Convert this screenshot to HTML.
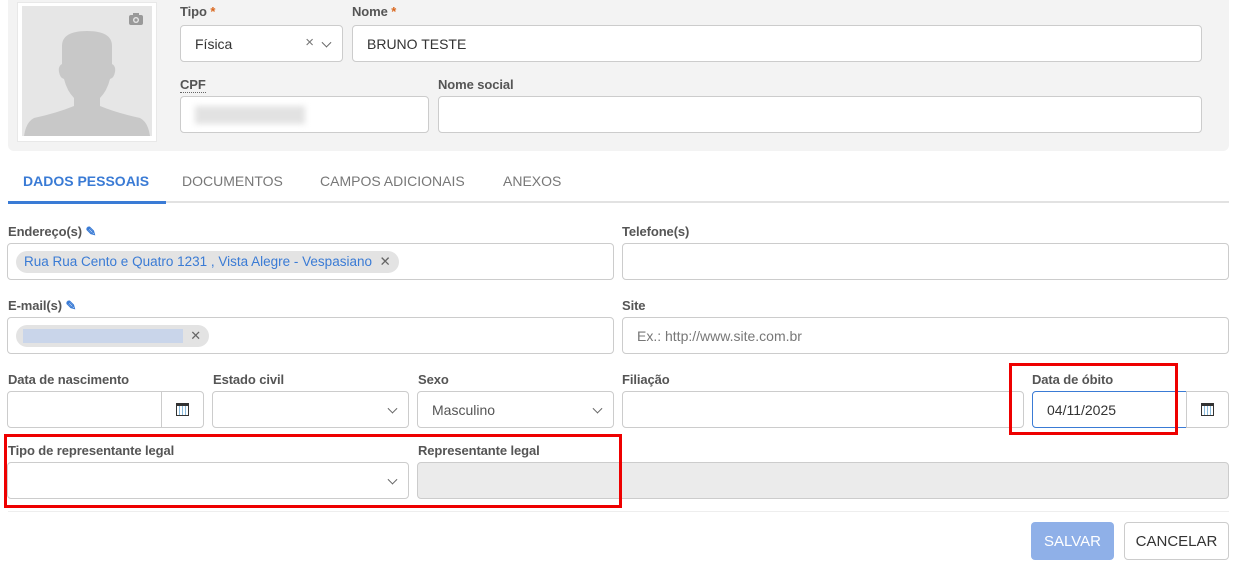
<!DOCTYPE html>
<html><head><meta charset="utf-8"><style>
*{box-sizing:border-box;margin:0;padding:0}
body{width:1236px;height:564px;background:#fff;font-family:"Liberation Sans",sans-serif;position:relative;overflow:hidden;color:#333}
.a{position:absolute}
.lbl{position:absolute;font-size:13px;color:#555;font-weight:bold;letter-spacing:-0.1px}
.inp{position:absolute;border:1px solid #ccc;border-radius:4px;background:#fff;font-size:14px;color:#333;padding-left:14px;display:flex;align-items:center}
.star{color:#d9661c}
.chev{position:absolute;right:12px;top:50%;width:7px;height:7px;border-right:1.3px solid #666;border-bottom:1.3px solid #666;transform:translateY(-70%) rotate(45deg)}
.cal{position:absolute;width:13px;height:13px;border:1.5px solid #333;border-top-width:3px;background:repeating-linear-gradient(90deg,#fff 0 2px,#8bd 2px 3px),#fff}
.btnc{position:absolute;border:1px solid #ccc;border-radius:0 4px 4px 0;background:#fff}
.red{position:absolute;border:3px solid #e00}
.tab{position:absolute;top:173px;font-size:14px;color:#777}
</style></head><body>
<div class="a" style="left:8px;top:0;width:1221px;height:151px;background:#f3f3f3;border-radius:0 0 6px 6px"></div>
<div class="a" style="left:17px;top:2px;width:140px;height:140px;background:#fff;border:1px solid #e8e8e8"></div>
<div class="a" style="left:22px;top:6px;width:130px;height:130px;background:#e6e6e6;overflow:hidden">
<svg width="130" height="130" viewBox="0 0 130 130"><path d="M40 40 Q40 25 65 25 Q90 25 90 40 L90 58 Q94 60 93 66 Q92 72 88 73 Q85 85 78 92 L78 100 Q95 107 118 112 Q126 116 128 130 L2 130 Q4 116 12 112 Q35 107 52 100 L52 92 Q45 85 42 73 Q38 72 37 66 Q36 60 40 58 Z" fill="#c8c8c8"/>
<rect x="107" y="9" width="14" height="10" rx="2" fill="#999"/><rect x="111" y="7" width="6" height="3" fill="#999"/><circle cx="114" cy="14" r="3" fill="#e6e6e6"/><circle cx="114" cy="14" r="1.6" fill="#999"/></svg></div>

<div class="lbl" style="left:180px;top:4px">Tipo <span class="star">*</span></div>
<div class="inp" style="left:180px;top:25px;width:163px;height:37px">Física<span class="a" style="right:28px;top:8px;color:#777;font-size:15px">×</span><span class="chev"></span></div>
<div class="lbl" style="left:352px;top:4px">Nome <span class="star">*</span></div>
<div class="inp" style="left:352px;top:25px;width:850px;height:37px">BRUNO TESTE</div>
<div class="lbl" style="left:180px;top:77px;border-bottom:1px dotted #666">CPF</div>
<div class="inp" style="left:180px;top:96px;width:249px;height:37px"><div style="width:110px;height:18px;background:#e2e2e2;filter:blur(3px);margin-left:0"></div></div>
<div class="lbl" style="left:438px;top:77px">Nome social</div>
<div class="inp" style="left:438px;top:96px;width:764px;height:37px"></div>

<div class="tab" style="left:23px;color:#3a7bd5;font-weight:bold">DADOS PESSOAIS</div>
<div class="tab" style="left:182px">DOCUMENTOS</div>
<div class="tab" style="left:320px">CAMPOS ADICIONAIS</div>
<div class="tab" style="left:503px">ANEXOS</div>
<div class="a" style="left:8px;top:201px;width:1221px;height:2px;background:#e2e2e2"></div>
<div class="a" style="left:8px;top:201px;width:158px;height:3px;background:#3a7bd5"></div>

<div class="lbl" style="left:8px;top:224px">Endereço(s) <span style="color:#3a7bd5">✎</span></div>
<div class="inp" style="left:7px;top:243px;width:607px;height:37px;padding-left:8px"><span style="background:#e3e3e3;border-radius:12px;padding:3px 8px;font-size:13.5px;color:#3a7bd5">Rua Rua Cento e Quatro 1231 , Vista Alegre - Vespasiano &nbsp;<span style="color:#666">✕</span></span></div>
<div class="lbl" style="left:622px;top:224px">Telefone(s)</div>
<div class="inp" style="left:622px;top:243px;width:607px;height:37px"></div>

<div class="lbl" style="left:8px;top:298px">E-mail(s) <span style="color:#3a7bd5">✎</span></div>
<div class="inp" style="left:7px;top:317px;width:607px;height:37px;padding-left:8px"><span style="background:#e3e3e3;border-radius:12px;padding:3px 8px 3px 7px;font-size:13px;color:#666;display:flex;align-items:center"><span style="display:inline-block;width:160px;height:14px;background:#c9d5ea"></span>&nbsp;&nbsp;✕</span></div>
<div class="lbl" style="left:622px;top:298px">Site</div>
<div class="inp" style="left:622px;top:317px;width:607px;height:37px;color:#777">Ex.: http://www.site.com.br</div>

<div class="lbl" style="left:8px;top:372px">Data de nascimento</div>
<div class="inp" style="left:7px;top:391px;width:155px;height:37px;border-radius:4px 0 0 4px"></div>
<div class="btnc" style="left:161px;top:391px;width:43px;height:37px"><span class="cal" style="left:14px;top:11px"></span></div>
<div class="lbl" style="left:213px;top:372px">Estado civil</div>
<div class="inp" style="left:212px;top:391px;width:197px;height:37px"><span class="chev"></span></div>
<div class="lbl" style="left:418px;top:372px">Sexo</div>
<div class="inp" style="left:417px;top:391px;width:197px;height:37px;color:#555">Masculino<span class="chev"></span></div>
<div class="lbl" style="left:622px;top:372px">Filiação</div>
<div class="inp" style="left:622px;top:391px;width:402px;height:37px"></div>
<div class="lbl" style="left:1032px;top:372px">Data de óbito</div>
<div class="inp" style="left:1032px;top:391px;width:155px;height:37px;border-color:#3a7bd5;border-radius:4px 0 0 4px">04/11/2025</div>
<div class="btnc" style="left:1186px;top:391px;width:43px;height:37px"><span class="cal" style="left:14px;top:11px"></span></div>
<div class="red" style="left:1009px;top:363px;width:169px;height:72px"></div>

<div class="lbl" style="left:8px;top:443px">Tipo de representante legal</div>
<div class="inp" style="left:7px;top:462px;width:402px;height:37px"><span class="chev"></span></div>
<div class="lbl" style="left:418px;top:443px">Representante legal</div>
<div class="inp" style="left:417px;top:462px;width:812px;height:37px;background:#ebebeb"></div>
<div class="red" style="left:4px;top:434px;width:618px;height:74px"></div>

<div class="a" style="left:8px;top:511px;width:1221px;height:1px;background:#eee"></div>
<div class="a" style="left:1031px;top:522px;width:83px;height:38px;background:#8fb0e8;border-radius:4px;color:#fff;font-size:15px;display:flex;align-items:center;justify-content:center">SALVAR</div>
<div class="a" style="left:1124px;top:522px;width:105px;height:38px;border:1px solid #ccc;border-radius:4px;color:#333;font-size:15px;display:flex;align-items:center;justify-content:center">CANCELAR</div>
</body></html>
